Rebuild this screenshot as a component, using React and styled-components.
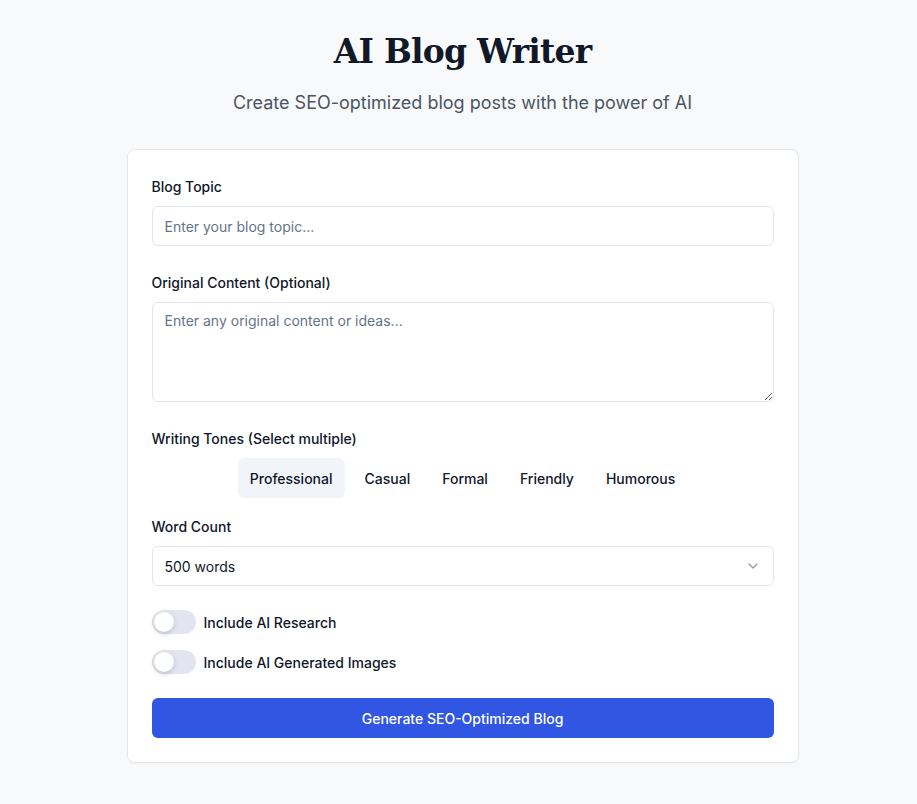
import React, { useState } from 'react';
import styled, { createGlobalStyle } from 'styled-components';

const GlobalStyle = createGlobalStyle`
  * { box-sizing: border-box; }
  body {
    margin: 0;
    background: #f8f9fb;
    font-family: Inter, "Noto Sans", sans-serif;
    color: #0f172a;
  }
`;

const Page = styled.main`
  min-height: 804px;
  padding: 26px 8px 40px 16px;
  display: flex;
  flex-direction: column;
  align-items: center;
`;

const Title = styled.h1`
  margin: 0;
  font-family: "DejaVu Serif", "Liberation Serif", serif;
  font-size: 33px;
  line-height: 52px;
  font-weight: 700;
  color: #111827;
  letter-spacing: -0.8px;
`;

const Subtitle = styled.p`
  margin: 11px 0 32px;
  font-size: 18px;
  line-height: 28px;
  color: #4b5563;
`;

const Card = styled.form`
  width: 672px;
  background: #fff;
  border: 1px solid #e5e7eb;
  border-radius: 8px;
  box-shadow: 0 1px 2px rgba(0, 0, 0, 0.04);
  padding: 24px;
  display: flex;
  flex-direction: column;
`;

const Field = styled.div`
  display: flex;
  flex-direction: column;
  margin-bottom: ${(p) => p.$gap ?? 24}px;
`;

const Label = styled.label`
  font-size: 14px;
  line-height: 26px;
  font-weight: 500;
  color: #0f172a;
  margin-bottom: 6px;
`;

const Input = styled.input`
  height: 40px;
  width: 100%;
  border: 1px solid #e2e4f0;
  border-radius: 6px;
  padding: 0 12px;
  font-family: inherit;
  font-size: 14px;
  color: #0f172a;
  background: #fff;
  outline: none;

  &::placeholder { color: #64748b; }
`;

const TextArea = styled.textarea`
  height: 100px;
  width: 100%;
  border: 1px solid #e2e4f0;
  border-radius: 6px;
  padding: 8px 12px;
  font-family: inherit;
  font-size: 14px;
  line-height: 20px;
  color: #0f172a;
  outline: none;
  resize: vertical;

  &::placeholder { color: #64748b; }
`;

const ToneRow = styled.div`
  display: flex;
  justify-content: center;
  gap: 8px;
`;

const ToneButton = styled.button`
  height: 40px;
  padding: 0 12px;
  border: none;
  border-radius: 6px;
  background: ${(p) => (p.$active ? '#f1f5f9' : 'transparent')};
  font-family: inherit;
  font-size: 14px;
  font-weight: 500;
  color: #0f172a;
  cursor: pointer;
`;

const SelectBox = styled.button`
  height: 40px;
  width: 100%;
  border: 1px solid #e2e4f0;
  border-radius: 6px;
  padding: 0 12px;
  background: #fff;
  display: flex;
  align-items: center;
  justify-content: space-between;
  font-family: inherit;
  font-size: 14px;
  color: #0f172a;
  cursor: pointer;
`;

const ToggleRow = styled.div`
  display: flex;
  align-items: center;
  gap: 8px;
  margin-bottom: ${(p) => p.$gap}px;
`;

const Track = styled.button`
  position: relative;
  width: 44px;
  height: 24px;
  border: none;
  border-radius: 12px;
  padding: 0;
  background: ${(p) => (p.$on ? '#3056e3' : '#e2e5f0')};
  cursor: pointer;
`;

const Thumb = styled.span`
  position: absolute;
  top: 2px;
  left: ${(p) => (p.$on ? 22 : 2)}px;
  width: 20px;
  height: 20px;
  border-radius: 50%;
  background: #fff;
  box-shadow: 0 2px 5px rgba(15, 23, 42, 0.18);
`;

const ToggleLabel = styled.span`
  font-size: 14px;
  font-weight: 500;
  color: #0f172a;
`;

const Submit = styled.button`
  height: 40px;
  width: 100%;
  border: none;
  border-radius: 6px;
  background: #3056e3;
  color: #fff;
  font-family: inherit;
  font-size: 14px;
  font-weight: 500;
  cursor: pointer;
`;

const tones = ['Professional', 'Casual', 'Formal', 'Friendly', 'Humorous'];

function Toggle({ label, gap }) {
  const [on, setOn] = useState(false);
  return (
    <ToggleRow $gap={gap}>
      <Track type="button" $on={on} onClick={() => setOn(!on)}>
        <Thumb $on={on} />
      </Track>
      <ToggleLabel>{label}</ToggleLabel>
    </ToggleRow>
  );
}

export default function App() {
  const [selected, setSelected] = useState(['Professional']);

  const toggleTone = (t) =>
    setSelected(selected.includes(t) ? selected.filter((x) => x !== t) : [...selected, t]);

  return (
    <>
      <GlobalStyle />
      <Page>
        <Title>AI Blog Writer</Title>
        <Subtitle>Create SEO-optimized blog posts with the power of AI</Subtitle>
        <Card onSubmit={(e) => e.preventDefault()}>
          <Field>
            <Label>Blog Topic</Label>
            <Input placeholder="Enter your blog topic..." />
          </Field>
          <Field>
            <Label>Original Content (Optional)</Label>
            <TextArea placeholder="Enter any original content or ideas..." />
          </Field>
          <Field $gap={16}>
            <Label>Writing Tones (Select multiple)</Label>
            <ToneRow>
              {tones.map((t) => (
                <ToneButton
                  key={t}
                  type="button"
                  $active={selected.includes(t)}
                  onClick={() => toggleTone(t)}
                >
                  {t}
                </ToneButton>
              ))}
            </ToneRow>
          </Field>
          <Field>
            <Label>Word Count</Label>
            <SelectBox type="button">
              <span>500 words</span>
              <svg width="16" height="16" viewBox="0 0 24 24" fill="none" stroke="#6b7280" strokeWidth="2" strokeLinecap="round" strokeLinejoin="round" opacity="0.7">
                <path d="m6 9 6 6 6-6" />
              </svg>
            </SelectBox>
          </Field>
          <Toggle label="Include AI Research" gap={16} />
          <Toggle label="Include AI Generated Images" gap={24} />
          <Submit type="submit">Generate SEO-Optimized Blog</Submit>
        </Card>
      </Page>
    </>
  );
}
